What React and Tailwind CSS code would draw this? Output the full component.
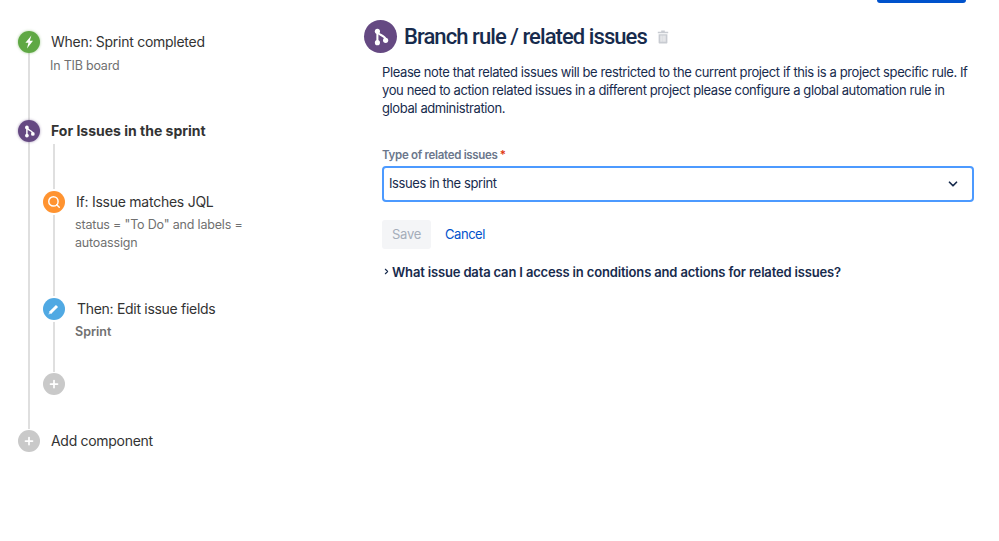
import React from 'react';
import { ChevronDown, ChevronRight, Plus, Search } from 'lucide-react';

function BranchIcon({ size = 14 }) {
  return (
    <svg width={size} height={size} viewBox="0 0 14 14" fill="none" stroke="white">
      <path d="M4.2 3v8" strokeWidth="1.6" />
      <path d="M4.2 3c.6 2.6 5.8 2.4 6.4 6" strokeWidth="1.6" />
      <circle cx="4.2" cy="2.6" r="2" fill="white" stroke="none" />
      <circle cx="4.2" cy="11.4" r="2" fill="white" stroke="none" />
      <circle cx="10.6" cy="9.6" r="2" fill="white" stroke="none" />
    </svg>
  );
}

function BoltIcon() {
  return (
    <svg width="12" height="14" viewBox="0 0 12 14" fill="white">
      <path d="M8.4 0.4 2.4 7.8h3L4 13.4 10 5.8H6.8z" />
    </svg>
  );
}

function PencilIcon() {
  return (
    <svg width="14" height="14" viewBox="0 0 14 14" fill="none">
      <path d="M3.2 10.8 10 4" stroke="white" strokeWidth="3" />
      <path d="M1.4 12.6 2.6 9.2 4.8 11.4z" fill="white" opacity="0.7" />
    </svg>
  );
}

function TrashIcon() {
  return (
    <svg width="12" height="14" viewBox="0 0 12 14" fill="#c8cbd1">
      <path d="M4.2 0.6h3.6v1.2h3.4v1.5H0.8V1.8h3.4z" />
      <path d="M1.6 4.2h8.8v8.2c0 .6-.4 1-1 1H2.6c-.6 0-1-.4-1-1zM3.6 5.6v6.2h.9V5.6zM5.6 5.6v6.2h.9V5.6zM7.5 5.6v6.2h.9V5.6z" fillRule="evenodd" />
    </svg>
  );
}

function Dot({ className, children }) {
  return (
    <div className={`w-[22px] h-[22px] shrink-0 -ml-[12px] rounded-full flex items-center justify-center ${className}`}>
      {children}
    </div>
  );
}

function AddDot() {
  return (
    <Dot className="bg-[#c9c9c9] ring-1 ring-white">
      <Plus size={12} strokeWidth={3.5} color="white" />
    </Dot>
  );
}

export default function App() {
  return (
    <div className="w-[999px] h-[541px] bg-white overflow-hidden font-['Inter','Noto_Sans',sans-serif] antialiased">
      <div className="flex justify-end pr-[33px]">
        <div className="w-[89px] h-[3px] rounded-b-[3px] bg-[#0052cc]" />
      </div>

      <div className="flex">
        <div className="w-[364px] shrink-0 pt-[28px]">
          <div className="ml-[28px] h-[399px] border-l-2 border-[#dfdfdf]">
            <div className="flex items-center h-[22px]">
              <Dot className="bg-[#5fa844] shadow-[0_0_2px_1px_rgba(95,168,68,0.25)]">
                <BoltIcon />
              </Dot>
              <div className="ml-[11px] text-[14px] leading-[22px] tracking-[-0.27px] text-[#333] whitespace-nowrap">When: Sprint completed</div>
            </div>
            <div className="ml-[20px] mt-[4px] text-[12.5px] leading-[18px] tracking-[-0.2px] text-[#707070]">In TIB board</div>

            <div className="flex items-center h-[22px] mt-[45px]">
              <Dot className="bg-[#654982] shadow-[0_0_2px_1px_rgba(101,73,130,0.25)]">
                <BranchIcon size={13} />
              </Dot>
              <div className="ml-[11px] text-[14px] leading-[22px] font-bold tracking-[0px] text-[#333] whitespace-nowrap">For Issues in the sprint</div>
            </div>

            <div className="ml-[23px] mt-[2px] h-[229px] border-l-2 border-[#dfdfdf] pt-[47px]">
              <div className="flex items-center h-[22px]">
                <Dot className="bg-[#ff9330] ring-2 ring-white">
                  <Search size={14} strokeWidth={2.5} color="white" />
                </Dot>
                <div className="ml-[11px] text-[14px] leading-[22px] tracking-[-0.25px] text-[#333] whitespace-nowrap">If: Issue matches JQL</div>
              </div>
              <div className="ml-[20px] mt-[3px] w-[190px] text-[12.5px] leading-[18px] tracking-[-0.18px] text-[#707070]">
                status = "To Do" and labels = autoassign
              </div>
              <div className="flex items-center h-[22px] mt-[46px]">
                <Dot className="bg-[#50a9e3] ring-2 ring-white">
                  <PencilIcon />
                </Dot>
                <div className="ml-[12px] text-[14px] leading-[22px] tracking-[-0.3px] text-[#333] whitespace-nowrap">Then: Edit issue fields</div>
              </div>
              <div className="ml-[20px] mt-[3px] text-[12.5px] leading-[18px] font-semibold text-[#707070]">Sprint</div>
            </div>

            <div className="ml-[25px]">
              <AddDot />
            </div>
          </div>

          <div className="flex items-center h-[22px] ml-[30px]">
            <AddDot />
            <div className="ml-[11px] text-[14px] leading-[22px] tracking-[-0.3px] text-[#333] whitespace-nowrap">Add component</div>
          </div>
        </div>

        <div className="w-[610px] shrink-0 pt-[17px]">
          <div className="flex items-center h-[33px]">
            <div className="w-[33px] h-[33px] rounded-full bg-[#654982] flex items-center justify-center">
              <BranchIcon size={18} />
            </div>
            <h1 className="ml-[7px] font-['Roboto',sans-serif] text-[22px] leading-[33px] font-medium tracking-[-0.93px] text-[#172b4d] whitespace-nowrap">Branch rule / related issues</h1>
            <div className="ml-[10px] flex">
              <TrashIcon />
            </div>
          </div>

          <div className="ml-[18px]">
            <p className="mt-[10px] w-[592px] text-[13px] leading-[18px] tracking-[-0.39px] text-[#172b4d]">
              Please note that related issues will be restricted to the current project if this is a project specific rule. If you need to action related issues in a different project please configure a global automation rule in global administration.
            </p>

            <div className="mt-[30px] text-[11.5px] leading-[16px] font-semibold tracking-[-0.3px] text-[#6b778c]">
              Type of related issues<span className="ml-[2px] text-[#de350b]">*</span>
            </div>
            <div className="mt-[3px] w-[592px] h-[36px] rounded-[4px] border-2 border-[#4c9aff] flex items-center justify-between pl-[5px] pr-[12px]">
              <span className="text-[13px] tracking-[-0.4px] text-[#172b4d]">Issues in the sprint</span>
              <ChevronDown size={14} strokeWidth={3} color="#172b4d" />
            </div>

            <div className="mt-[18px] flex items-center h-[29px]">
              <button className="w-[49px] h-[29px] rounded-[3px] bg-[#f4f5f7] text-[13px] tracking-[-0.3px] text-[#a5adba]">Save</button>
              <button className="ml-[14px] text-[13px] tracking-[-0.45px] text-[#0052cc]">Cancel</button>
            </div>

            <div className="mt-[15px] flex items-center h-[18px]">
              <ChevronRight size={9} strokeWidth={3} color="#172b4d" className="-mt-[3px]" />
              <span className="ml-px text-[13px] font-semibold tracking-[-0.16px] text-[#172b4d] whitespace-nowrap">What issue data can I access in conditions and actions for related issues?</span>
            </div>
          </div>
        </div>
      </div>
    </div>
  );
}
